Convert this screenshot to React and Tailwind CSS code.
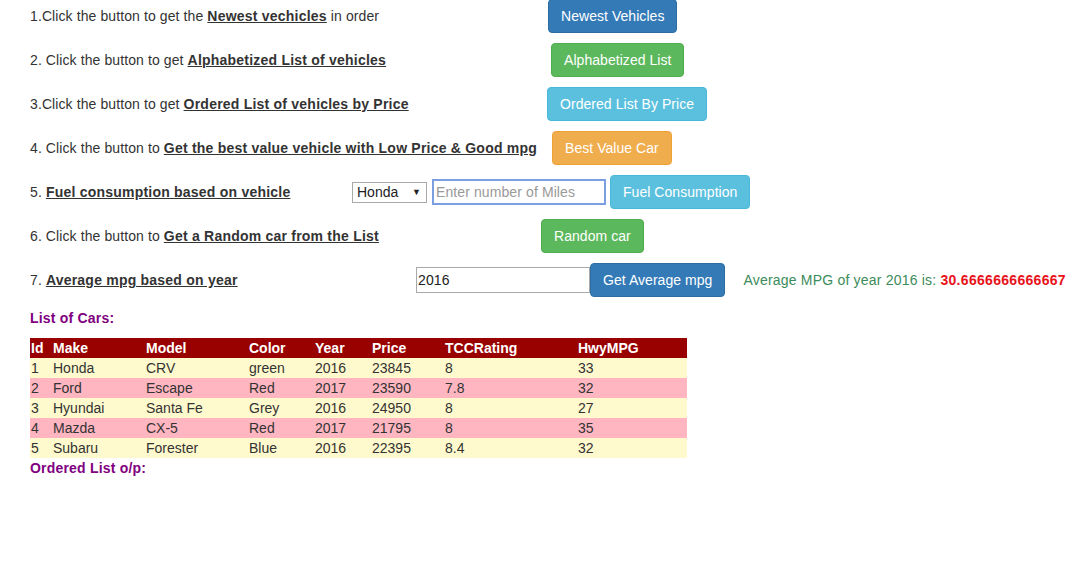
const btn = {
  primary: 'bg-[#337ab7] border-[#2e6da4]',
  success: 'bg-[#5cb85c] border-[#4cae4c]',
  info: 'bg-[#5bc0de] border-[#46b8da]',
  warning: 'bg-[#f0ad4e] border-[#eea236]',
}

const Btn = ({ kind, children }) => (
  <button className={`h-[34px] px-3 border rounded text-white text-[14px] leading-5 tracking-[0.05px] ${btn[kind]}`}>
    {children}
  </button>
)

const B = ({ children }) => <b className="underline font-bold tracking-[0.22px]">{children}</b>

const cars = [
  [1, 'Honda', 'CRV', 'green', 2016, 23845, '8', 33],
  [2, 'Ford', 'Escape', 'Red', 2017, 23590, '7.8', 32],
  [3, 'Hyundai', 'Santa Fe', 'Grey', 2016, 24950, '8', 27],
  [4, 'Mazda', 'CX-5', 'Red', 2017, 21795, '8', 35],
  [5, 'Subaru', 'Forester', 'Blue', 2016, 22395, '8.4', 32],
]

const cols = ['w-[23px] pl-[1px]', 'w-[93px]', 'w-[103px]', 'w-[66px]', 'w-[57px]', 'w-[73px]', 'w-[133px]', 'w-[109px]']
const heads = ['Id', 'Make', 'Model', 'Color', 'Year', 'Price', 'TCCRating', 'HwyMPG']

export default function App() {
  return (
    <div className="w-[1086px] h-[576px] bg-white text-[#333] text-[14px] leading-5 pl-[30px] overflow-hidden" style={{ fontFamily: '"Liberation Sans", Arial, sans-serif' }}>
      <div className="flex flex-col gap-[10px] -mt-[1px] tracking-[0.1px]">
        <div className="flex items-center h-[34px]">
          <span className="w-[518px]">1.Click the button to get the <B>Newest vechicles</B> in order</span>
          <Btn kind="primary">Newest Vehicles</Btn>
        </div>
        <div className="flex items-center h-[34px]">
          <span className="w-[521px]">2. Click the button to get <B>Alphabetized List of vehicles</B></span>
          <Btn kind="success">Alphabetized List</Btn>
        </div>
        <div className="flex items-center h-[34px]">
          <span className="w-[517px]">3.Click the button to get <B>Ordered List of vehicles by Price</B></span>
          <Btn kind="info">Ordered List By Price</Btn>
        </div>
        <div className="flex items-center h-[34px]">
          <span className="w-[522px]">4. Click the button to <B>Get the best value vehicle with Low Price &amp; Good mpg</B></span>
          <Btn kind="warning">Best Value Car</Btn>
        </div>
        <div className="flex items-center h-[34px]">
          <span className="w-[322px]">5. <B>Fuel consumption based on vehicle</B></span>
          <div className="w-[75px] h-[21px] border border-[#a9a9a9] flex items-center justify-between pl-[4px] pr-[5px] text-[#222] tracking-normal">
            <span>Honda</span>
            <span className="text-[9px]">▼</span>
          </div>
          <input
            className="ml-[5px] w-[174px] h-[26px] border-2 border-[#7b9fe0] px-[2px] text-[14px] outline-none placeholder:text-[#999]"
            placeholder="Enter number of Miles"
          />
          <div className="ml-[4px]"><Btn kind="info">Fuel Consumption</Btn></div>
        </div>
        <div className="flex items-center h-[34px]">
          <span className="w-[511px]">6. Click the button to <B>Get a Random car from the List</B></span>
          <Btn kind="success">Random car</Btn>
        </div>
        <div className="flex items-center h-[34px]">
          <span className="w-[386px]">7. <B>Average mpg based on year</B></span>
          <input
            className="w-[174px] h-[26px] border border-[#a9a9a9] px-[1px] text-[14px] text-[#222] outline-none"
            defaultValue="2016"
          />
          <Btn kind="primary">Get Average mpg</Btn>
          <span className="ml-[18px] text-[#3c8b5a] tracking-[0.2px]">
            Average MPG of year 2016 is: <b className="text-[#e8121b] tracking-[0.3px]">30.6666666666667</b>
          </span>
        </div>
      </div>

      <p className="mt-[11px] font-bold text-[#800080] h-[20px] tracking-[0.2px]">List of Cars:</p>
      <table className="mt-[10px] w-[657px] border-collapse">
        <thead>
          <tr className="bg-[#990000] text-white font-bold h-[20px]">
            {heads.map((h, i) => (
              <td key={h} className={`${cols[i]} p-0 text-left`}>{h}</td>
            ))}
            <td className="p-0" />
          </tr>
        </thead>
        <tbody>
          {cars.map((c, r) => (
            <tr key={c[0]} className={`h-[20px] ${r % 2 ? 'bg-[#ffb6c1]' : 'bg-[#fffacd]'}`}>
              {c.map((v, i) => (
                <td key={i} className={`${cols[i]} p-0`}>{v}</td>
              ))}
              <td className="p-0" />
            </tr>
          ))}
        </tbody>
      </table>
      <p className="font-bold text-[#800080] h-[20px] tracking-[0.2px]">Ordered List o/p:</p>
    </div>
  )
}
